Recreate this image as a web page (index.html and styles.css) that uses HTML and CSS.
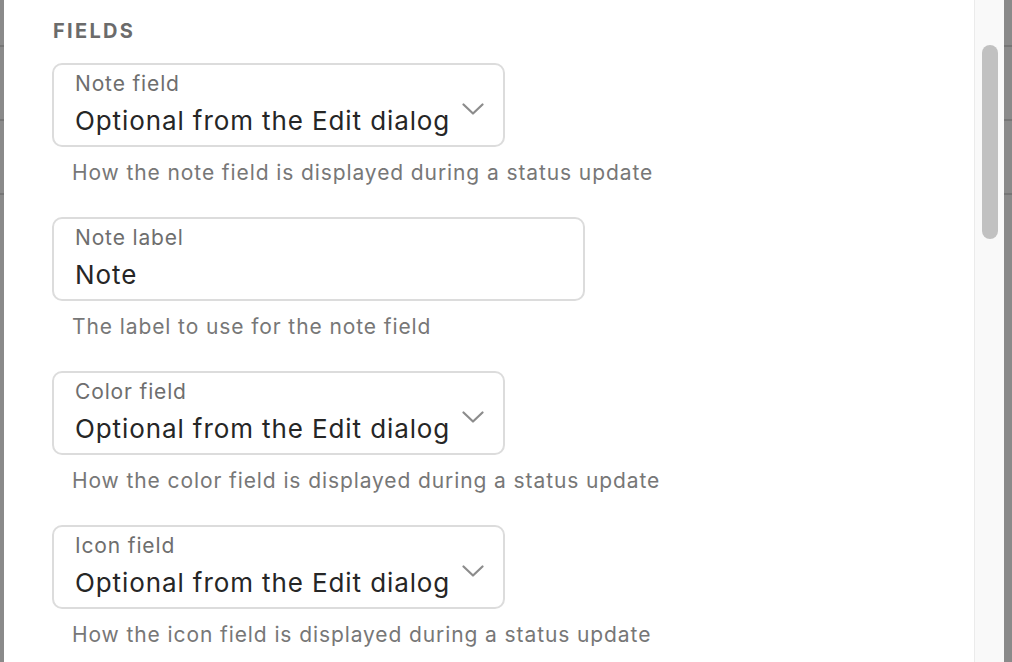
FILE: index.html
```html
<!DOCTYPE html>
<html lang="en">
<head>
<meta charset="utf-8">
<title>Fields</title>
<link rel="stylesheet" href="styles.css">
</head>
<body>
<div class="screen">
  <div class="backdrop backdrop-left">
    <div class="row-line l1"></div>
    <div class="row-line l2"></div>
    <div class="row-line l3"></div>
  </div>
  <main class="panel">
    <h2 class="section-title">FIELDS</h2>

    <div class="field-group">
      <div class="field select w-short">
        <div class="field-text">
          <div class="field-label">Note field</div>
          <div class="field-value">Optional from the Edit dialog</div>
        </div>
        <svg class="chevron" width="22" height="12" viewBox="0 0 22 12"><polyline points="1.5,1.5 11,10.5 20.5,1.5" fill="none" stroke="#8c8c8c" stroke-width="2.2" stroke-linecap="round" stroke-linejoin="round"/></svg>
      </div>
      <div class="help">How the note field is displayed during a status update</div>
    </div>

    <div class="field-group">
      <div class="field w-long">
        <div class="field-text">
          <div class="field-label">Note label</div>
          <div class="field-value">Note</div>
        </div>
      </div>
      <div class="help">The label to use for the note field</div>
    </div>

    <div class="field-group">
      <div class="field select w-short">
        <div class="field-text">
          <div class="field-label">Color field</div>
          <div class="field-value">Optional from the Edit dialog</div>
        </div>
        <svg class="chevron" width="22" height="12" viewBox="0 0 22 12"><polyline points="1.5,1.5 11,10.5 20.5,1.5" fill="none" stroke="#8c8c8c" stroke-width="2.2" stroke-linecap="round" stroke-linejoin="round"/></svg>
      </div>
      <div class="help">How the color field is displayed during a status update</div>
    </div>

    <div class="field-group">
      <div class="field select w-short">
        <div class="field-text">
          <div class="field-label">Icon field</div>
          <div class="field-value">Optional from the Edit dialog</div>
        </div>
        <svg class="chevron" width="22" height="12" viewBox="0 0 22 12"><polyline points="1.5,1.5 11,10.5 20.5,1.5" fill="none" stroke="#8c8c8c" stroke-width="2.2" stroke-linecap="round" stroke-linejoin="round"/></svg>
      </div>
      <div class="help">How the icon field is displayed during a status update</div>
    </div>
  </main>
  <div class="scroll-track">
    <div class="scroll-thumb"></div>
  </div>
  <div class="backdrop backdrop-right">
    <div class="row-line l1"></div>
    <div class="row-line l2"></div>
    <div class="row-line l3"></div>
  </div>
</div>
</body>
</html>
```
FILE: styles.css
```css
* { box-sizing: border-box; }
html, body {
  margin: 0;
  padding: 0;
  background: #ffffff;
  overflow: hidden;
}
body {
  font-family: Inter, "Noto Sans", "Liberation Sans", sans-serif;
  color: #262626;
}
.screen {
  display: flex;
  width: 1012px;
  height: 662px;
  overflow: hidden;
}
.backdrop {
  background: #8a8a8a;
  display: flex;
  flex-direction: column;
}
.backdrop-left { width: 4px; }
.backdrop-right { width: 8px; }
.row-line {
  height: 2px;
  background: #767676;
}
.row-line.l1 { margin-top: 45px; }
.row-line.l2 { margin-top: 72px; }
.row-line.l3 { margin-top: 72px; }

.panel {
  width: 970px;
  padding: 17px 0 0 48px;
  display: flex;
  flex-direction: column;
}
.section-title {
  margin: 0 0 0 1px;
  font-size: 20px;
  line-height: 28px;
  font-weight: 700;
  letter-spacing: 2.3px;
  color: #6b6b6b;
}
.field-group {
  display: flex;
  flex-direction: column;
}
.section-title + .field-group { margin-top: 18px; }
.field-group + .field-group { margin-top: 30px; }

.field {
  display: flex;
  align-items: center;
  height: 84px;
  border: 2px solid #dcdcdc;
  border-radius: 10px;
  padding: 5px 19px 6px 21px;
}
.w-short { width: 453px; }
.w-long { width: 533px; }
.field-text {
  flex: 1;
  display: flex;
  flex-direction: column;
  gap: 5px;
}
.field-label {
  font-size: 21px;
  line-height: 28px;
  color: #6e6e6e;
  letter-spacing: 0.85px;
}
.field-value {
  font-size: 26px;
  line-height: 36px;
  color: #262626;
  letter-spacing: 0.9px;
}
.chevron {
  flex: none;
  margin-top: 9px;
}
.help {
  margin: 12px 0 0 20px;
  font-size: 21px;
  line-height: 28px;
  color: #777777;
  letter-spacing: 0.9px;
}

.scroll-track {
  width: 30px;
  background: #f9f9f9;
  border-left: 1px solid #ebebeb;
  display: flex;
  flex-direction: column;
  align-items: flex-start;
  padding-left: 7px;
}
.scroll-thumb {
  margin-top: 45px;
  width: 16px;
  height: 194px;
  border-radius: 8px;
  background: #c1c1c1;
}
```
